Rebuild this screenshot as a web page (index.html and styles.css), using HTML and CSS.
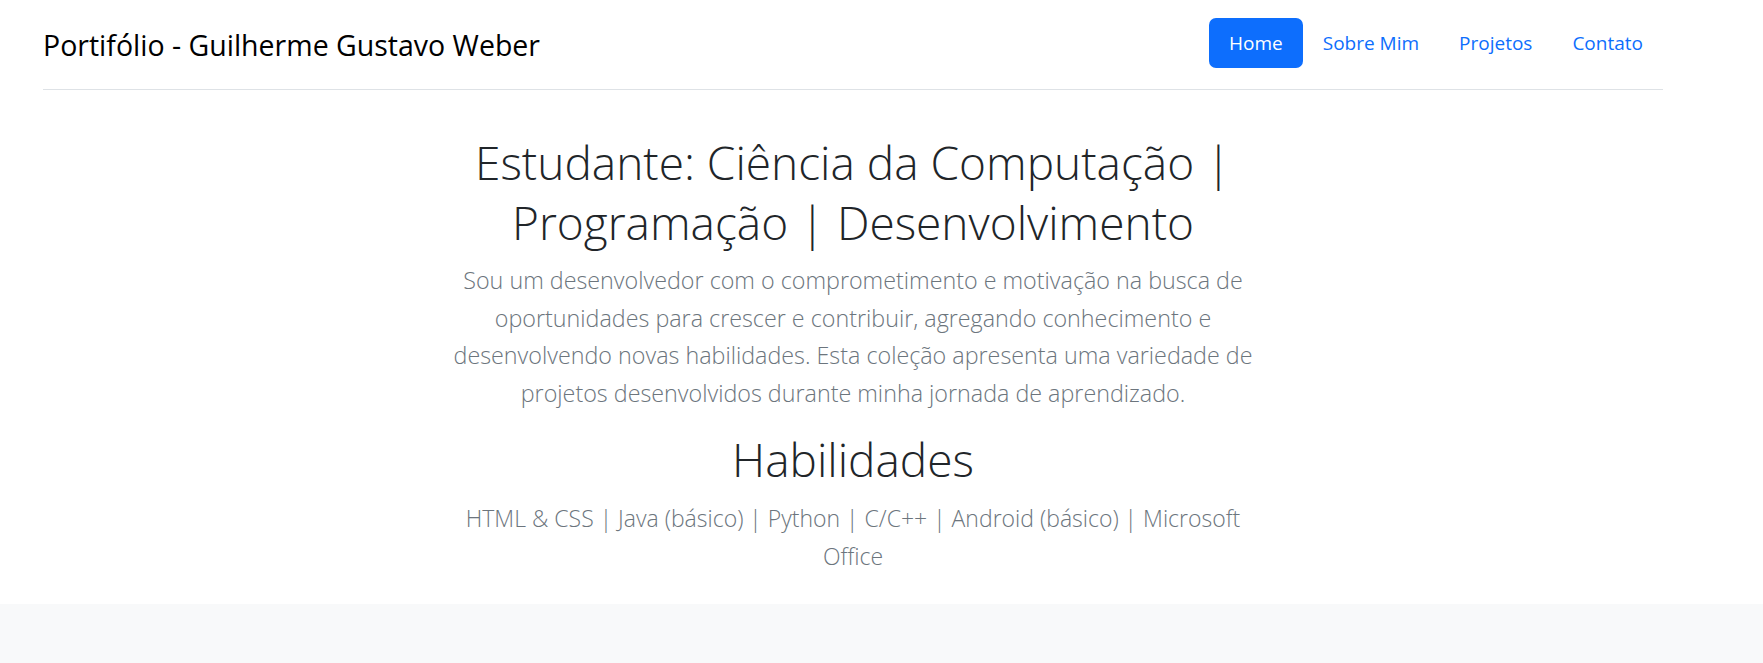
FILE: index.html
```html
<!DOCTYPE html>
<html lang="pt-BR">
<head>
<meta charset="utf-8">
<title>Portifólio - Guilherme Gustavo Weber</title>
<link rel="stylesheet" href="styles.css">
</head>
<body>
<header class="site-header">
  <div class="header-inner">
    <a class="brand" href="#">Portifólio - Guilherme Gustavo Weber</a>
    <nav class="nav">
      <a class="nav-link active" href="#">Home</a>
      <a class="nav-link" href="#">Sobre Mim</a>
      <a class="nav-link" href="#">Projetos</a>
      <a class="nav-link" href="#">Contato</a>
    </nav>
  </div>
</header>
<main class="hero">
  <h1 class="hero-title">Estudante: Ciência da Computação | Programação | Desenvolvimento</h1>
  <p class="lead">Sou um desenvolvedor com o comprometimento e motivação na busca de oportunidades para crescer e contribuir, agregando conhecimento e desenvolvendo novas habilidades. Esta coleção apresenta uma variedade de projetos desenvolvidos durante minha jornada de aprendizado.</p>
  <h2 class="hero-title skills-title">Habilidades</h2>
  <p class="lead skills">HTML &amp; CSS | Java (básico) | Python | C/C++ | Android (básico) | Microsoft Office</p>
</main>
<footer class="band"></footer>
</body>
</html>
```

FILE: styles.css
```css
html, body {
  margin: 0;
  padding: 0;
  background: #ffffff;
}
body {
  font-family: "Open Sans", "Noto Sans", sans-serif;
  color: #212529;
  min-height: 663px;
  display: flex;
  flex-direction: column;
}
.site-header {
  padding: 0 100px 0 43px;
}
.header-inner {
  display: flex;
  align-items: center;
  justify-content: space-between;
  padding: 18px 0 21px;
  border-bottom: 1px solid #dee2e6;
}
.brand {
  font-family: "Open Sans", sans-serif;
  font-size: 28.5px;
  line-height: 40px;
  padding-top: 4px;
  color: #000;
  text-decoration: none;
}
.nav {
  display: flex;
}
.nav-link {
  display: block;
  padding: 0 20px;
  height: 50px;
  line-height: 50px;
  font-size: 19px;
  color: #0d6efd;
  text-decoration: none;
  border-radius: 7px;
}
.nav-link.active {
  background: #0d6efd;
  color: #fff;
}
.hero {
  width: 812px;
  margin: 0 0 0 447px;
  text-align: center;
  padding: 42px 0 0;
  flex: 1;
}
.hero-title {
  font-family: "Open Sans", sans-serif;
  font-weight: 300;
  font-size: 46px;
  line-height: 60px;
  margin: 0;
  color: #212529;
}
.lead {
  font-family: "Open Sans", sans-serif;
  font-weight: 300;
  font-size: 23.3px;
  line-height: 37.5px;
  color: #6c757d;
  margin: 10px 0 0;
}
.skills-title {
  margin-top: 17px;
}
.skills {
  font-size: 23px;
  margin-top: 11px;
}
.band {
  height: 59px;
  background: #f8f9fa;
}
```
